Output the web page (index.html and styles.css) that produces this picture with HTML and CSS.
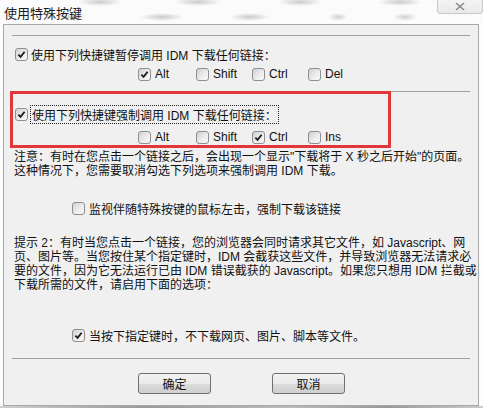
FILE: index.html
```html
<!DOCTYPE html>
<html lang="zh-CN">
<head>
  <meta charset="UTF-8">
  <title>使用特殊按键</title>
  <link rel="stylesheet" href="styles.css">
</head>
<body>
<div class="titlebar">
  <span class="title">使用特殊按键</span>
  <span class="close">
    <svg width="10" height="9" viewBox="0 0 10 9"><path d="M1 1 L9 8 M9 1 L1 8" stroke="#8a8a8a" stroke-width="1.6"/></svg>
  </span>
</div>

<div class="dialog">
  <div class="sep"></div>

  <label class="row first">
    <span class="cb on"><svg viewBox="0 0 13 13"><path d="M2.8 6.6 L5.4 9.2 L10.2 3.2" /></svg></span>
    <span>使用下列快捷键暂停调用 IDM 下载任何链接：</span>
  </label>
  <div class="keys">
    <label class="key"><span class="cb on"><svg viewBox="0 0 13 13"><path d="M2.8 6.6 L5.4 9.2 L10.2 3.2" /></svg></span>Alt</label>
    <label class="key"><span class="cb"></span>Shift</label>
    <label class="key"><span class="cb"></span>Ctrl</label>
    <label class="key"><span class="cb"></span>Del</label>
  </div>

  <div class="group">
    <div class="sep"></div>
    <label class="row force">
      <span class="cb on"><svg viewBox="0 0 13 13"><path d="M2.8 6.6 L5.4 9.2 L10.2 3.2" /></svg></span>
      <span class="focus">使用下列快捷键强制调用 IDM 下载任何链接：</span>
    </label>
    <div class="keys second">
      <label class="key"><span class="cb"></span>Alt</label>
      <label class="key"><span class="cb"></span>Shift</label>
      <label class="key"><span class="cb on"><svg viewBox="0 0 13 13"><path d="M2.8 6.6 L5.4 9.2 L10.2 3.2" /></svg></span>Ctrl</label>
      <label class="key"><span class="cb"></span>Ins</label>
    </div>
    <div class="mark"></div>
  </div>

  <p class="note">注意：有时在您点击一个链接之后，会出现一个显示"下载将于 X 秒之后开始"的页面。<br>这种情况下，您需要取消勾选下列选项来强制调用 IDM 下载。</p>

  <label class="row indent monitor">
    <span class="cb"></span>
    <span>监视伴随特殊按键的鼠标左击，强制下载该链接</span>
  </label>

  <p class="note hint">提示 2：有时当您点击一个链接，您的浏览器会同时请求其它文件，如 Javascript、网<br>页、图片等。当您按住某个指定键时，IDM 会截获这些文件，并导致浏览器无法请求必<br>要的文件，因为它无法运行已由 IDM 错误截获的 Javascript。如果您只想用 IDM 拦截或<br>下载所需的文件，请启用下面的选项：</p>

  <label class="row indent last">
    <span class="cb on"><svg viewBox="0 0 13 13"><path d="M2.8 6.6 L5.4 9.2 L10.2 3.2" /></svg></span>
    <span>当按下指定键时，不下载网页、图片、脚本等文件。</span>
  </label>

  <div class="sep bottom"></div>

  <div class="buttons">
    <button class="btn">确定</button>
    <button class="btn">取消</button>
  </div>
</div>
<div class="under"></div>
</body>
</html>
```

FILE: styles.css
```css
body {
  margin: 0;
  width: 483px;
  height: 408px;
  overflow: hidden;
  background: #fdfdfd;
  font-family: "Liberation Sans", "Noto Sans CJK SC", sans-serif;
  font-size: 12px;
  color: #111;
}

/* blurred window behind the dialog */
.titlebar {
  height: 24px;
  display: flex;
  justify-content: space-between;
  align-items: flex-start;
  background:
    radial-gradient(ellipse 22px 4px at 100px 2px, rgba(110,110,110,.35), transparent),
    radial-gradient(ellipse 24px 4px at 198px 2px, rgba(110,110,110,.35), transparent),
    radial-gradient(ellipse 22px 4px at 300px 2px, rgba(110,110,110,.35), transparent),
    radial-gradient(ellipse 22px 4px at 400px 2px, rgba(110,110,110,.35), transparent),
    radial-gradient(ellipse 14px 4px at 72px 17px, rgba(110,110,110,.3), transparent),
    radial-gradient(ellipse 22px 4px at 162px 17px, rgba(110,110,110,.35), transparent),
    radial-gradient(ellipse 20px 4px at 250px 17px, rgba(110,110,110,.35), transparent),
    radial-gradient(ellipse 10px 4px at 338px 17px, rgba(110,110,110,.3), transparent),
    radial-gradient(ellipse 12px 4px at 405px 17px, rgba(110,110,110,.3), transparent),
    #fbfbfb;
}

.title {
  padding: 3px 0 0 4px;
  font-size: 13px;
  color: #1b1b1b;
}

.close {
  width: 46px;
  height: 14px;
  display: flex;
  justify-content: center;
  align-items: center;
  border: 1px solid #c9c9c9;
  border-top: none;
  border-radius: 0 0 4px 4px;
  background: linear-gradient(#f4f4f4, #e9e9e9);
  box-sizing: border-box;
}

.dialog {
  margin: 0 4px 0 3px;
  border: 1px solid #a9a9a9;
  background: #f0f0f0;
  padding: 10px 0 11px;
}

.sep {
  height: 1px;
  margin: 0 8px;
  background: #a0a0a0;
}

.row {
  display: flex;
  align-items: center;
  gap: 3px;
  height: 16px;
  padding-left: 11px;
  white-space: nowrap;
}

.row.first { margin-top: 10px; }
.row.force { margin-top: 14px; }
.row.indent { padding-left: 68px; gap: 4px; }
.row.monitor { margin-top: 22px; }
.row.last { margin-top: 35px; }

.focus {
  outline: 1px dotted #222;
  outline-offset: 0;
  padding: 0 1px;
}

.keys {
  display: grid;
  grid-template-columns: 58px 56px 56px auto;
  margin: 4px 0 0 134px;
  height: 16px;
}

.keys.second { margin-top: 7px; }

.key {
  display: flex;
  align-items: center;
  gap: 4px;
}

.cb {
  width: 13px;
  height: 13px;
  box-sizing: border-box;
  border: 1px solid #8f8f8f;
  border-radius: 3px;
  background: linear-gradient(135deg, #d2d2d2, #eeeeee 60%, #f8f8f8);
  flex: none;
  display: flex;
}

.cb svg {
  width: 11px;
  height: 11px;
}

.cb svg path {
  fill: none;
  stroke: #1d1d1d;
  stroke-width: 2.2;
}

.group {
  position: relative;
  margin-top: 9px;
  padding-bottom: 3px;
}

.mark {
  position: absolute;
  left: 6px;
  top: 0;
  width: 381px;
  height: 57px;
  box-sizing: border-box;
  border: 3px solid #e2363b;
}

.note {
  margin: 2px 0 0 10px;
  line-height: 14px;
  white-space: nowrap;
}

.note.hint { margin-top: 20px; }

.sep.bottom { margin-top: 15px; }

.buttons {
  display: flex;
  gap: 61px;
  margin: 14px 0 0 134px;
}

.btn {
  width: 73px;
  height: 21px;
  border: 1px solid #707070;
  border-radius: 3px;
  background: linear-gradient(#f2f2f2 0%, #ebebeb 50%, #dddddd 51%, #cfcfcf 100%);
  font-family: "Liberation Sans", "Noto Sans CJK SC", sans-serif;
  font-size: 12px;
  color: #111;
  padding: 0;
}

.under {
  height: 2px;
  background: linear-gradient(90deg, #cfcfcf, #9a9a9a 30%, #bbbbbb 60%, #999 80%, #ccc);
}
```
